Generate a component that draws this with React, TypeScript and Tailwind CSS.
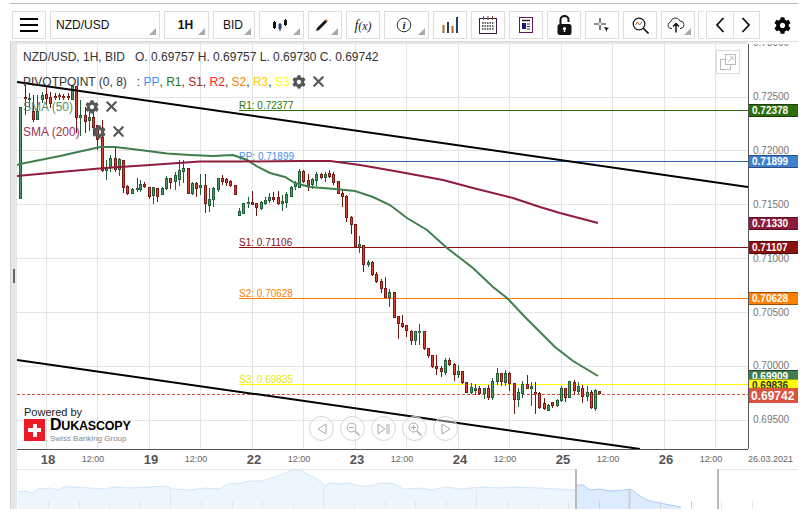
import { ReactNode } from "react";
import { FaCog } from "react-icons/fa";
import { X } from "lucide-react";

// x, body top, body bottom, high, low, 1 = green
const candles: number[][] = [
  [20, 107, 199, 107, 199, 1], [25, 97, 99, 85, 115, 0], [29, 98, 100, 93, 107, 1], [33, 111, 120, 95, 122, 0],
  [37, 111, 120, 95, 120, 1], [42, 95, 100, 92, 103, 1], [46, 94, 99, 86, 105, 0], [50, 97, 104, 92, 108, 0],
  [55, 96, 98, 93, 100, 0], [59, 95, 97, 93, 100, 0], [63, 96, 97, 94, 100, 0], [68, 96, 98, 93, 100, 0],
  [72, 86, 100, 86, 100, 1], [76, 86, 118, 86, 133, 0], [80, 115, 118, 100, 136, 1], [85, 115, 122, 107, 133, 0],
  [89, 117, 121, 108, 131, 1], [93, 117, 128, 112, 134, 0], [97, 125, 140, 125, 150, 0], [102, 137, 171, 120, 172, 0],
  [106, 167, 171, 160, 180, 1], [110, 158, 168, 155, 172, 1], [115, 158, 170, 148, 172, 0], [119, 159, 170, 158, 176, 1],
  [123, 160, 188, 160, 193, 0], [127, 186, 194, 185, 195, 0], [132, 189, 194, 188, 194, 1], [137, 188, 190, 178, 192, 1],
  [140, 184, 190, 180, 192, 1], [144, 184, 187, 182, 188, 0], [149, 187, 197, 187, 199, 0], [153, 187, 196, 187, 204, 1],
  [157, 188, 197, 188, 202, 0], [162, 188, 195, 187, 195, 1], [166, 178, 189, 176, 190, 1], [170, 178, 183, 178, 189, 0],
  [175, 175, 182, 172, 190, 1], [179, 170, 180, 160, 186, 1], [183, 168, 172, 160, 183, 1], [188, 168, 194, 168, 194, 0],
  [192, 183, 194, 182, 195, 1], [196, 183, 189, 182, 197, 0], [200, 185, 188, 174, 195, 1], [205, 185, 204, 174, 213, 0],
  [209, 199, 206, 188, 212, 1], [213, 188, 200, 187, 207, 1], [218, 178, 190, 178, 192, 1], [222, 178, 182, 175, 185, 0],
  [226, 179, 183, 178, 186, 0], [230, 181, 186, 180, 187, 0], [235, 185, 195, 185, 195, 0], [239, 211, 216, 208, 216, 1],
  [243, 203, 214, 203, 214, 1], [248, 202, 204, 197, 208, 1], [252, 202, 205, 191, 205, 0], [256, 203, 208, 203, 216, 0],
  [261, 202, 209, 201, 210, 1], [265, 200, 204, 197, 205, 1], [269, 197, 201, 193, 203, 1], [273, 197, 200, 192, 202, 0],
  [278, 197, 204, 191, 205, 0], [282, 201, 204, 195, 211, 1], [286, 194, 203, 192, 208, 1], [291, 187, 197, 186, 197, 1],
  [295, 183, 187, 181, 190, 1], [299, 171, 188, 169, 188, 1], [303, 171, 182, 170, 183, 0], [308, 180, 186, 174, 191, 0],
  [312, 179, 185, 178, 189, 1], [316, 174, 181, 172, 186, 1], [321, 174, 178, 173, 179, 0], [325, 174, 178, 172, 182, 1],
  [329, 173, 177, 170, 178, 0], [333, 174, 183, 172, 185, 0], [338, 181, 194, 181, 194, 0], [342, 193, 197, 190, 207, 0],
  [346, 196, 218, 195, 222, 0], [351, 217, 225, 216, 234, 0], [355, 224, 247, 224, 248, 0], [359, 244, 247, 236, 253, 1],
  [363, 245, 265, 245, 272, 0], [368, 262, 265, 260, 267, 1], [372, 262, 275, 261, 276, 0], [376, 274, 282, 272, 283, 0],
  [381, 281, 289, 279, 293, 0], [385, 288, 298, 277, 298, 0], [389, 292, 298, 289, 307, 1], [394, 292, 318, 292, 318, 0],
  [398, 316, 324, 316, 339, 0], [402, 323, 327, 315, 328, 0], [406, 325, 331, 325, 337, 0], [411, 331, 341, 330, 345, 0],
  [415, 331, 341, 331, 345, 1], [419, 331, 333, 324, 345, 1], [424, 331, 349, 331, 350, 0], [428, 348, 356, 348, 358, 0],
  [432, 355, 367, 355, 368, 0], [436, 366, 369, 355, 375, 0], [441, 368, 372, 366, 377, 0], [445, 360, 373, 358, 375, 1],
  [449, 360, 365, 358, 366, 0], [454, 364, 375, 363, 381, 0], [458, 371, 375, 365, 378, 1], [462, 371, 383, 371, 384, 0],
  [466, 382, 393, 382, 393, 0], [471, 387, 393, 383, 394, 1], [475, 388, 391, 384, 395, 1], [479, 388, 394, 386, 395, 0],
  [484, 388, 394, 388, 399, 1], [488, 388, 398, 385, 400, 0], [492, 381, 398, 378, 400, 1], [497, 373, 382, 368, 385, 1],
  [501, 373, 382, 373, 386, 0], [505, 373, 383, 370, 386, 1], [509, 373, 384, 372, 391, 0], [514, 383, 400, 383, 414, 0],
  [518, 392, 400, 388, 407, 1], [522, 384, 394, 381, 398, 1], [527, 384, 389, 375, 389, 0], [531, 386, 389, 382, 406, 1],
  [535, 392, 394, 382, 414, 0], [539, 393, 408, 392, 409, 0], [544, 403, 409, 398, 410, 0], [548, 405, 411, 404, 411, 1],
  [552, 402, 406, 402, 408, 0], [557, 400, 406, 399, 407, 1], [561, 388, 401, 386, 402, 1], [565, 388, 398, 388, 402, 0],
  [569, 381, 398, 381, 398, 1], [574, 382, 391, 380, 394, 0], [578, 386, 392, 382, 394, 1], [582, 388, 397, 385, 403, 0],
  [587, 392, 397, 386, 401, 1], [591, 392, 408, 390, 409, 0], [595, 390, 409, 389, 411, 1], [599, 391, 394, 391, 394, 0],
];

const sma50 = "17,165 20,164 60,156 100,147 115,147 140,150 167,153.5 190,155 213,156 233,155 247,160 258,167 270,173 285,177 295,183 310,187 335,189 355,191 373,197 390,205 407,218 427,230 447,248 473,268 493,287 507,298 525,317 540,332 555,347 573,361 598,376";
const sma200 = "17,176 60,172 105,168 150,165 200,161.5 240,161.5 300,161 330,161 360,165 400,172 443,180 473,188 513,198 540,207 560,213 598,223";
const navLight = "18,492 25,491 32,493 38,489 50,488 58,490 64,487 72,487 90,488 105,489 115,487 128,488 150,487 165,486 172,489 190,490 205,488 220,489 226,485 232,483 238,484 250,481 262,481 275,477 285,473 292,470 300,470 307,474 314,477 320,481 325,486 330,483 340,484 350,483 360,486 372,486 380,483 395,484 403,489 420,488 432,490 445,487 462,489 480,487 500,488 515,487 540,488 575,490";
const navDark = "577,485 583,485 590,490 600,489 610,491 625,490 631,489 637,494 643,498 650,501 660,503 670,505 681,507";

const priceTicks = ["0.73000", "0.72500", "0.72000", "0.71500", "0.71000", "0.70500", "0.70000", "0.69500"];
const days = ["18", "19", "22", "23", "24", "25", "26"];
const gridX = [46.5, 97.5, 149.5, 200.5, 252.5, 303.5, 355.5, 406.5, 458.5, 509.5, 561.5, 612.5, 664.5, 715.5];
const gridY = [97.5, 150.5, 204.5, 258.5, 312.5, 366.5, 420.5];

const levels = [
  { y: 110.5, x: 239, color: "#2b6e0a", label: "R1: 0.72377" },
  { y: 161.5, x: 239, color: "#2f62a8", label: "PP: 0.71899", labelColor: "#4a90ee" },
  { y: 247.5, x: 239, color: "#8b1010", label: "S1: 0.71106" },
  { y: 298.5, x: 239, color: "#ff8000", label: "S2: 0.70628" },
  { y: 384.5, x: 239, color: "#ffff00", label: "S3: 0.69835", labelColor: "#e8e800" },
];

function Corner() {
  return (
    <svg className="absolute right-[3px] bottom-[3px]" width="7" height="7" viewBox="0 0 7 7">
      <polygon points="7,0 7,7 0,7" fill="#aaaaaa" />
    </svg>
  );
}

function ToolButton({ w, corner, children }: { w: string; corner?: boolean; children: ReactNode }) {
  return (
    <div className={`relative ${w} h-[28px] border border-[#dddddd] bg-white flex items-center justify-center shrink-0`}>
      {children}
      {corner && <Corner />}
    </div>
  );
}

function Toolbar() {
  return (
    <div className="mt-[7px] ml-[2px] h-[28px] flex items-center gap-[4px] text-[12px] text-[#111]">
      <ToolButton w="w-[34px]">
        <div className="flex flex-col gap-[4px]">
          <div className="w-[18px] h-[2px] bg-black" />
          <div className="w-[18px] h-[2px] bg-black" />
          <div className="w-[18px] h-[2px] bg-black" />
        </div>
      </ToolButton>
      <ToolButton w="w-[110px]" corner>
        <span className="w-full pl-[5px]">NZD/USD</span>
      </ToolButton>
      <ToolButton w="w-[45px]" corner>
        <span className="font-bold pr-[2px]">1H</span>
      </ToolButton>
      <ToolButton w="w-[42px]" corner>
        <span className="pr-[2px]">BID</span>
      </ToolButton>
      <ToolButton w="w-[45px]" corner>
        <svg width="16" height="14" viewBox="0 0 16 14" className="mr-[4px]">
          <path d="M2.5 3v8M8 5v8M13.5 1v7" stroke="#111" strokeWidth="1" />
          <rect x="1" y="4" width="3" height="6" fill="#111" />
          <rect x="6.5" y="6" width="3" height="5" fill="#2a3f7a" />
          <rect x="12" y="2" width="3" height="5" fill="#111" />
        </svg>
      </ToolButton>
      <ToolButton w="w-[34px]" corner>
        <svg width="14" height="14" viewBox="0 0 14 14" className="mr-[6px]">
          <path d="M1 13l1-3 8-8 2 2-8 8z" fill="#111" />
          <path d="M10 2l1-1 2 2-1 1z" fill="#c8690a" />
        </svg>
      </ToolButton>
      <ToolButton w="w-[34px]">
        <span className="text-[12px] italic text-[#222] font-['Liberation_Serif',serif]">
          <span className="text-[14px]">f</span>(x)
        </span>
      </ToolButton>
      <ToolButton w="w-[45px]" corner>
        <svg width="16" height="16" viewBox="0 0 16 16" className="mr-[6px]">
          <circle cx="8" cy="8" r="6.8" fill="none" stroke="#333" strokeWidth="1" />
          <text x="8" y="12" textAnchor="middle" fontSize="11" fontStyle="italic" fontWeight="700" fontFamily="Liberation Serif, serif" fill="#222">i</text>
        </svg>
      </ToolButton>
      <ToolButton w="w-[34px]">
        <svg width="17" height="16" viewBox="0 0 17 16">
          <rect x="0.5" y="8" width="2" height="8" fill="#b5651d" />
          <rect x="5" y="5" width="2" height="11" fill="#2a3f5a" />
          <rect x="9.5" y="9" width="2" height="7" fill="#b5651d" />
          <rect x="14" y="0" width="2" height="16" fill="#1f3f7a" />
        </svg>
      </ToolButton>
      <ToolButton w="w-[34px]">
        <svg width="18" height="18" viewBox="0 0 18 18">
          <rect x="0.5" y="2.5" width="17" height="15" fill="none" stroke="#3a1a4a" strokeWidth="1" />
          <path d="M4.5 0v4M9 0v4M13.5 0v4" stroke="#7a4a2a" strokeWidth="1" />
          <path d="M3 7h12M3 10h12M3 13h12" stroke="#333" strokeWidth="1.4" strokeDasharray="1.5 1" />
        </svg>
      </ToolButton>
      <ToolButton w="w-[34px]">
        <svg width="14" height="16" viewBox="0 0 14 16">
          <rect x="0.5" y="0.5" width="13" height="15" fill="none" stroke="#5a1a5a" strokeWidth="1" />
          <path d="M3 3.5h8" stroke="#222" strokeWidth="1.4" />
          <rect x="3" y="6" width="4" height="6" fill="#1a1a6a" />
          <path d="M8 7h3M8 9.5h3M8 12h3" stroke="#333" strokeWidth="1" />
        </svg>
      </ToolButton>
      <ToolButton w="w-[34px]">
        <svg width="15" height="20" viewBox="0 0 15 20">
          <path d="M3.5 9V4.5a4 3.5 0 0 1 8 0V7" fill="none" stroke="#111" strokeWidth="2" />
          <rect x="0.5" y="9" width="14" height="11" rx="2.5" fill="#111" />
          <circle cx="7.5" cy="13.5" r="1.6" fill="#fff" />
          <rect x="6.8" y="13.5" width="1.4" height="3.5" fill="#fff" />
        </svg>
      </ToolButton>
      <ToolButton w="w-[34px]">
        <svg width="16" height="15" viewBox="0 0 16 15">
          <path d="M6 0v5M6 7v5M0 6h5M7 6h5" stroke="#222" strokeWidth="1.2" />
          <polygon points="10,9 15,10 13,11.5 13,14" fill="#111" />
        </svg>
      </ToolButton>
      <ToolButton w="w-[34px]">
        <svg width="17" height="17" viewBox="0 0 17 17">
          <circle cx="7" cy="7" r="5.8" fill="none" stroke="#111" strokeWidth="1.2" />
          <path d="M3.5 8l2-3 2 3 2.5-3" fill="none" stroke="#b5651d" strokeWidth="1" />
          <path d="M11 11l5.5 5.5" stroke="#111" strokeWidth="1.6" />
        </svg>
      </ToolButton>
      <ToolButton w="w-[34px]" corner>
        <svg width="18" height="16" viewBox="0 0 18 16" className="mr-[4px]">
          <path d="M5 11.5H4a3.3 3.3 0 0 1-.5-6.5 5 5 0 0 1 9.5-1 3.8 3.8 0 0 1 1 7.5h-1" fill="none" stroke="#333" strokeWidth="1" />
          <path d="M9 15.5V7M6 9.5L9 6.5l3 3" fill="none" stroke="#111" strokeWidth="1.5" />
        </svg>
      </ToolButton>
      <div className="w-[6px] h-[28px] border-y border-l border-[#dddddd] shrink-0 -ml-[1px] mr-[-2px]" />
      <div className="flex h-[28px] w-[54px] border border-[#dddddd] shrink-0">
        <div className="flex-1 flex items-center justify-center border-r border-[#dddddd]">
          <svg width="10" height="16" viewBox="0 0 10 16"><path d="M8.5 1L2 8l6.5 7" fill="none" stroke="#111" strokeWidth="1.8" /></svg>
        </div>
        <div className="flex-1 flex items-center justify-center">
          <svg width="10" height="16" viewBox="0 0 10 16"><path d="M1.5 1L8 8l-6.5 7" fill="none" stroke="#111" strokeWidth="1.8" /></svg>
        </div>
      </div>
      <FaCog className="ml-[10px] text-black" size={17} />
    </div>
  );
}

function ChartDrawing() {
  return (
    <svg className="absolute inset-0" width="731" height="405" viewBox="17 44 731 405">
      {gridX.map((x) => (
        <line key={x} x1={x} x2={x} y1={44} y2={449} stroke="#e4e4e4" />
      ))}
      {gridY.map((y) => (
        <line key={y} x1={17} x2={748} y1={y} y2={y} stroke="#e4e4e4" />
      ))}
      {levels.map((l) => (
        <g key={l.label}>
          <line x1={l.x} x2={748} y1={l.y} y2={l.y} stroke={l.color} strokeWidth="1" />
          <text x={l.x} y={l.y - 1.5} fontSize="10" fill={l.labelColor ?? l.color}>{l.label}</text>
        </g>
      ))}
      <line x1={17} x2={748} y1={394.5} y2={394.5} stroke="#e0503c" strokeDasharray="3 2" />
      {candles.map(([x, top, bottom, high, low, up]) => (
        <g key={x} shapeRendering="crispEdges">
          <rect x={x} y={high} width="1" height={low - high} fill={up ? "#1f5f38" : "#6f1610"} />
          <rect x={x - 1} y={top} width="3" height={Math.max(bottom - top, 2)} fill={up ? "#1f5f38" : "#7a1a12"} />
          <rect x={x} y={top + 1} width="1" height={Math.max(bottom - top - 2, 1)} fill={up ? "#4f9a6c" : "#d8452f"} />
        </g>
      ))}
      <polyline points={sma50} fill="none" stroke="#3f7f4f" strokeWidth="2" />
      <polyline points={sma200} fill="none" stroke="#8e1c3a" strokeWidth="2" />
      <line x1={17} y1={82} x2={748} y2={187} stroke="#000" strokeWidth="2" />
      <line x1={17} y1={360} x2={640} y2={449} stroke="#000" strokeWidth="2" />
    </svg>
  );
}

function LegendIcons({ className }: { className: string }) {
  return (
    <div className={`flex items-center ${className}`}>
      <FaCog size={14} className="text-[#555]" />
      <X size={17} strokeWidth={3} className="ml-[4px] text-[#555]" />
    </div>
  );
}

function Legend() {
  return (
    <div className="absolute left-[6px] top-0 flex flex-col text-[12px] text-[#333] whitespace-pre">
      <div className="h-[24px] flex items-center mt-[1px]">NZD/USD, 1H, BID   O. 0.69757 H. 0.69757 L. 0.69730 C. 0.69742</div>
      <div className="h-[25px] flex items-center">
        <span>PIVOTPOINT (0, 8)   : </span>
        <span className="text-[#4a90ff]">PP</span>, <span className="text-[#2b7a0b]">R1</span>, <span className="text-[#b22222]">S1</span>, <span className="text-[#ff2222]">R2</span>, <span className="text-[#ff8000]">S2</span>, <span className="text-[#ffcc00]">R3</span>, <span className="text-[#ffff00]">S3</span>
        <LegendIcons className="ml-[2px]" />
      </div>
      <div className="h-[25px] flex items-center text-[#5a8f68]">
        SMA (50)
        <LegendIcons className="ml-[12px]" />
      </div>
      <div className="h-[25px] flex items-center text-[#a53050]">
        SMA (200)
        <LegendIcons className="ml-[12px]" />
      </div>
    </div>
  );
}

function Logo() {
  return (
    <div className="absolute left-[7px] top-[362px] flex flex-col">
      <span className="text-[11px] leading-[13px] text-[#222]">Powered by</span>
      <div className="flex items-start gap-[5px]">
        <div className="w-[21px] h-[22px] bg-[#ed1c24] flex items-center justify-center relative">
          <div className="absolute w-[13px] h-[4px] bg-white" />
          <div className="absolute w-[4px] h-[13px] bg-white" />
        </div>
        <div className="flex flex-col">
          <span className="font-bold text-black text-[12.5px] leading-[12px] tracking-[-0.2px]">
            <span className="text-[16px]">D</span>UKASCOPY
          </span>
          <span className="mt-[1px] text-[8px] leading-[11px] text-[#888]">Swiss Banking Group</span>
        </div>
      </div>
    </div>
  );
}

function RoundButton({ children }: { children: ReactNode }) {
  return (
    <div className="w-[25px] h-[25px] rounded-full border border-[#d5d5d5] bg-white/40 flex items-center justify-center">
      {children}
    </div>
  );
}

function ZoomGlyph({ plus }: { plus?: boolean }) {
  return (
    <svg width="14" height="14" viewBox="0 0 14 14">
      <circle cx="5.5" cy="5.5" r="4.5" fill="none" stroke="#aaa" strokeWidth="1" />
      <path d="M9 9l4.5 4.5" stroke="#aaa" strokeWidth="1.4" />
      <path d={plus ? "M3 5.5h5M5.5 3v5" : "M3 5.5h5"} stroke="#aaa" strokeWidth="1" />
    </svg>
  );
}

function ChartControls() {
  return (
    <div className="absolute left-[292px] top-[372px] flex gap-[6px]">
      <RoundButton>
        <svg width="10" height="12" viewBox="0 0 10 12"><path d="M9 1L1 6l8 5z" fill="none" stroke="#aaa" /></svg>
      </RoundButton>
      <RoundButton><ZoomGlyph /></RoundButton>
      <RoundButton>
        <svg width="13" height="12" viewBox="0 0 13 12"><path d="M1 1l7 5-7 5zM10 1v10M12 1v10" fill="none" stroke="#aaa" /></svg>
      </RoundButton>
      <RoundButton><ZoomGlyph plus /></RoundButton>
      <RoundButton>
        <svg width="10" height="12" viewBox="0 0 10 12"><path d="M1 1l8 5-8 5z" fill="none" stroke="#aaa" /></svg>
      </RoundButton>
    </div>
  );
}

function PriceAxis() {
  // the last three overlap each other in the reference, later ones cover earlier ones
  const badges = [
    { top: 60, cls: "bg-[#2b6e0a] text-white border-[#1d3d0a]", text: "0.72378" },
    { top: 111, cls: "bg-[#3f7fd0] text-white border-[#2b4f80]", text: "0.71899" },
    { top: 173, cls: "bg-[#8e1c3a] text-white border-[#5a1024]", text: "0.71330" },
    { top: 197, cls: "bg-[#8b1010] text-white border-[#550a0a]", text: "0.71107" },
    { top: 248, cls: "bg-[#ff8000] text-white border-[#a05000]", text: "0.70628" },
    { top: 326, cls: "bg-[#3f7f4f] text-white border-[#244a2e]", text: "0.69909" },
    { top: 335, cls: "bg-[#ffff00] text-[#333] border-[#a0a000]", text: "0.69836" },
  ];
  return (
    <div className="relative w-[50px] h-[405px] border-l border-[#555] shrink-0 overflow-hidden">
      <div className="flex flex-col mt-[-28px] text-[10px] text-[#777] pl-[4px]">
        {priceTicks.map((t) => (
          <div key={t} className="h-[53.83px] flex items-center">{t}</div>
        ))}
      </div>
      {badges.map((b) => (
        <div
          key={b.text}
          className={`absolute left-[-1px] w-[51px] h-[13px] border overflow-hidden flex items-center pl-[3px] text-[10px] font-bold ${b.cls}`}
          style={{ top: b.top }}
        >
          {b.text}
        </div>
      ))}
      <div className="absolute left-[-1px] top-[344px] w-[51px] h-[15px] bg-[#d9533f] text-white text-[12px] font-bold flex items-center pl-[3px]">
        0.69742
      </div>
    </div>
  );
}

function TimeAxis() {
  return (
    <div className="h-[19px] flex items-center pl-[19px] w-[781px]">
      {days.map((d) => (
        <div key={d} className="w-[103px] flex items-center shrink-0">
          <span className="w-[24px] text-center text-[13px] font-bold text-[#555]">{d}</span>
          <span className="ml-[22px] w-[22px] flex justify-center text-[9px] text-[#666]">12:00</span>
        </div>
      ))}
      <span className="text-[9px] text-[#666] ml-[-9px] whitespace-nowrap">26.03.2021</span>
    </div>
  );
}

function Navigator() {
  const ticks: { x: number; tall: boolean }[] = [];
  for (let k = 0; k < 24; k++) {
    ticks.push({ x: Math.round(48 + 30.6 * k) + 0.5, tall: k % 5 === 4 });
  }
  return (
    <svg className="block" width="781" height="40" viewBox="17 469 781 40">
      <line x1={17} x2={575} y1={469.5} y2={469.5} stroke="#e6e6e6" />
      <line x1={718} x2={798} y1={469.5} y2={469.5} stroke="#e6e6e6" />
      <polygon points={`18,510 ${navLight} 575,510`} fill="#edf5fd" stroke="none" />
      <polyline points={navLight} fill="none" stroke="#d3e5f9" />
      <polygon points={`577,510 ${navDark} 681,510`} fill="#dcebfd" />
      <polyline points={navDark} fill="none" stroke="#aecbf5" />
      {ticks.map((t) => (
        <line key={t.x} x1={t.x} x2={t.x} y1={t.tall ? 489 : 501} y2={509} stroke={t.x > 577 && t.x < 700 ? "#cfcfcf" : "#e6e6e6"} strokeWidth={t.tall && t.x > 600 ? 2 : 1} />
      ))}
      <line x1={576} x2={576} y1={469} y2={509} stroke="#bbbbbb" strokeWidth="2" />
      <line x1={718} x2={718} y1={469} y2={509} stroke="#bbbbbb" strokeWidth="2" />
    </svg>
  );
}

export default function App() {
  return (
    <div className="relative w-[806px] h-[512px] overflow-hidden bg-white font-['Liberation_Sans',Arial,sans-serif]">
      <div className="pl-[10px] pr-[8px] pt-[3px]">
        <div className="h-px bg-[#bbbbbb]" />
        <Toolbar />
        <div className="mt-[2px] h-px bg-[#dddddd]" />
        <div className="flex">
          <div className="w-[7px] h-[467px] bg-[#e6e6e6] border-l border-[#cfcfcf] shrink-0 flex items-center justify-center">
            <div className="w-[2px] h-[14px] bg-[#666]" />
          </div>
          <div className="flex flex-col">
            <div className="h-[2px] w-[731px] bg-[#e6e6e6]" />
            <div className="flex">
              <div className="relative w-[731px] h-[406px] border-b border-[#555] overflow-hidden shrink-0">
                <ChartDrawing />
                <Legend />
                <div className="absolute left-[699px] top-[6px] w-[24px] h-[24px] border border-[#dddddd] bg-white flex items-center justify-center">
                  <svg width="16" height="16" viewBox="0 0 16 16">
                    <rect x="0.5" y="5.5" width="10" height="10" fill="none" stroke="#bbb" />
                    <rect x="5.5" y="0.5" width="10" height="10" fill="#fff" stroke="#bbb" />
                    <path d="M8 8l5-5M10 3h3v3" fill="none" stroke="#bbb" />
                  </svg>
                </div>
                <Logo />
                <ChartControls />
              </div>
              <PriceAxis />
            </div>
            <TimeAxis />
            <Navigator />
          </div>
        </div>
      </div>
    </div>
  );
}
